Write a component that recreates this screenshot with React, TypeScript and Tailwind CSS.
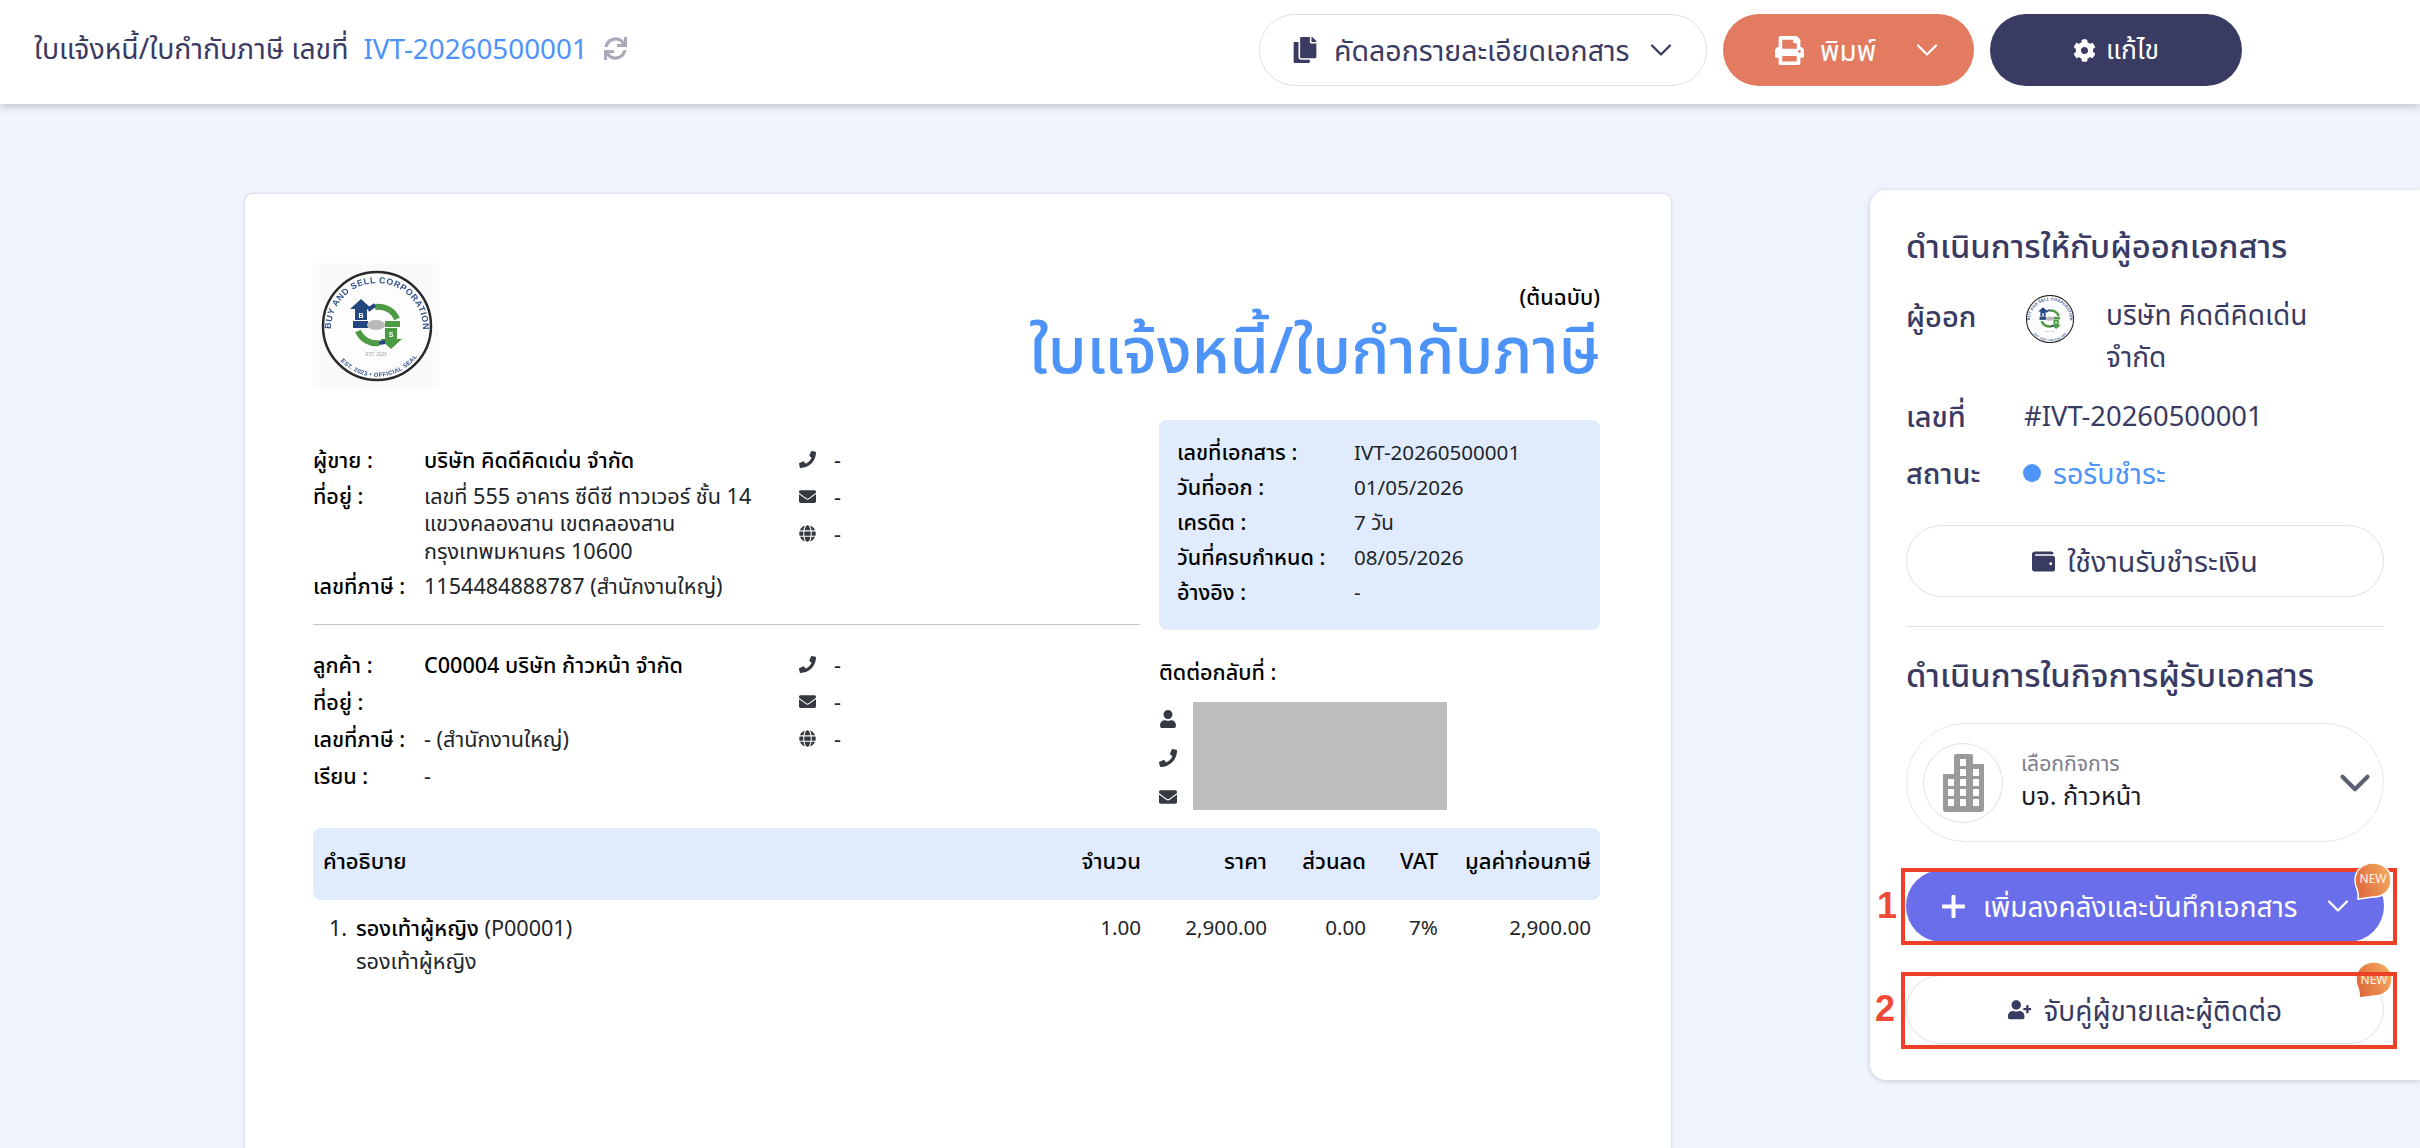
import { FaCog, FaCopy, FaPrint, FaSync, FaWallet, FaPhone, FaEnvelope, FaGlobe, FaUser, FaUserPlus } from 'react-icons/fa'
import { ChevronDown } from 'lucide-react'
import type { ReactNode } from 'react'

function SealLogo({ size, compact }: { size: number; compact?: boolean }) {
  return (
    <svg width={size} height={size} viewBox={compact ? '9 8 110 110' : '0 0 126 126'} className="blur-[0.4px]">
      <defs>
        <path id="sealTop" d="M18 66 A46 46 0 0 1 110 66" />
        <path id="sealBottom" d="M25 95 A50 50 0 0 0 103 95" />
      </defs>
      <circle cx="64" cy="63" r="54" fill="#fdfdfd" stroke="#2a2a2a" strokeWidth="2.5" />
      <text fontSize="8.8" fontWeight="700" fill="#34528c" letterSpacing="0.55" fontFamily="'Liberation Sans', sans-serif">
        <textPath href="#sealTop">BUY AND SELL CORPORATION</textPath>
      </text>
      <text fontSize="6" fontWeight="700" fill="#34528c" letterSpacing="0.35" fontFamily="'Liberation Sans', sans-serif">
        <textPath href="#sealBottom" startOffset="4">EST. 2023 • OFFICIAL SEAL</textPath>
      </text>
      <path d="M42 57 L42 46 L37 46 L48 36 L59 46 L54 46 L54 57 Z" fill="#24477f" />
      <text x="48" y="55" textAnchor="middle" fontSize="7" fontWeight="700" fill="#ffffff" fontFamily="'Liberation Sans', sans-serif">B</text>
      <path d="M72 65 L72 76 L67 76 L78 86 L89 76 L84 76 L84 65 Z" fill="#4d9a44" />
      <text x="78" y="74" textAnchor="middle" fontSize="7" fontWeight="700" fill="#ffffff" fontFamily="'Liberation Sans', sans-serif">S</text>
      <path d="M62 44 A20 20 0 0 1 84 56" fill="none" stroke="#4d9a44" strokeWidth="6" />
      <path d="M45 68 A20 20 0 0 0 66 80" fill="none" stroke="#4d9a44" strokeWidth="6" />
      <path d="M55 47 L62 42 M66 80 L72 79" fill="none" stroke="#24477f" strokeWidth="4" />
      <rect x="40" y="58" width="15" height="7" fill="#24477f" />
      <rect x="72" y="58" width="15" height="6" fill="#4d9a44" />
      <ellipse cx="63" cy="62" rx="9" ry="5" fill="#b9b9b9" />
      <text x="63" y="93" textAnchor="middle" fontSize="4.6" fill="#a0a0a0" fontFamily="'Liberation Sans', sans-serif">EST. 2023</text>
    </svg>
  )
}

function BuildingIcon() {
  const windows = [
    [5, 25], [5, 35], [5, 45],
    [17, 5], [17, 15], [17, 25], [17, 35], [17, 45],
    [30, 15], [30, 25], [30, 35], [30, 45],
  ]
  return (
    <svg width="41" height="58" viewBox="0 0 41 58">
      <path d="M11 2 Q11 0 13 0 L28 0 Q30 0 30 2 L30 10 L41 10 L41 55 Q41 58 38 58 L3 58 Q0 58 0 55 L0 20 L11 20 Z" fill="#9a9a9a" />
      {windows.map(([x, y]) => (
        <rect key={`${x}-${y}`} x={x} y={y} width="6" height="7" fill="#ffffff" />
      ))}
    </svg>
  )
}

function NewBadge({ clipped }: { clipped?: boolean }) {
  return (
    <div className={`absolute h-[38px] w-[38px] ${clipped ? 'right-[-9px] top-[-14px]' : 'right-[-8px] top-[-8px]'}`}>
      <svg width="38" height="38" viewBox="0 0 38 38" className="absolute inset-0">
        <defs>
          <linearGradient id="badgeFill" x1="0" y1="1" x2="1" y2="0.6">
            <stop offset="0" stopColor="#dd5f38" />
            <stop offset="1" stopColor="#f0a45c" />
          </linearGradient>
        </defs>
        <path d="M19 1 C29 1 37 8 37 18 C37 29 29 35 19 35 L4 37 C5 33 4 31 3 27 C1 23 1 21 1 18 C1 8 9 1 19 1 Z" fill="url(#badgeFill)" stroke="#ffffff" strokeWidth="1.5" />
      </svg>
      <span className={`absolute inset-x-0 text-center text-[12px] leading-[14px] text-[#fff3ea] ${clipped ? 'top-[12px]' : 'top-[10px]'}`}>NEW</span>
    </div>
  )
}

function ContactIcon({ icon }: { icon: ReactNode }) {
  return (
    <div className="flex h-[27.5px] items-center gap-[18px]">
      <span className="flex w-[18px] justify-center text-[17px] text-[#343a40]">{icon}</span>
      <span className="text-[21.6px] leading-[27.5px] text-[#212529]">-</span>
    </div>
  )
}

function Row({ label, children }: { label: string; children?: ReactNode }) {
  return (
    <div className="flex">
      <span className="w-[111px] shrink-0 text-[21.6px] font-medium leading-[27.5px] text-black">{label}</span>
      <div className="min-w-0 text-[21.6px] leading-[27.5px] text-[#212529]">{children}</div>
    </div>
  )
}

function MetaRow({ label, value }: { label: string; value: string }) {
  return (
    <div className="flex h-[35px] items-center">
      <span className="w-[177px] text-[21.6px] font-medium text-black">{label}</span>
      <span className="text-[20.6px] text-[#212529]">{value}</span>
    </div>
  )
}

const columns = [
  { title: 'จำนวน', value: '1.00', width: 'w-[90px]' },
  { title: 'ราคา', value: '2,900.00', width: 'w-[126px]' },
  { title: 'ส่วนลด', value: '0.00', width: 'w-[99px]' },
  { title: 'VAT', value: '7%', width: 'w-[72px]' },
  { title: 'มูลค่าก่อนภาษี', value: '2,900.00', width: 'w-[153px]' },
]

export default function App() {
  return (
    <div className="h-[1148px] w-full overflow-hidden bg-[#f0f4fc] font-['Noto_Sans','Noto_Sans_Thai',sans-serif] text-[#3a3b63]">
      <header className="relative z-10 flex h-[104px] items-center justify-between bg-white pb-1 pl-[34px] pr-[178px] shadow-[0_2px_8px_rgba(60,70,100,0.3)]">
        <div className="mb-[3px] flex items-center">
          <span className="text-[28.4px]">ใบแจ้งหนี้/ใบกำกับภาษี เลขที่</span>
          <span className="ml-[15px] text-[27.8px] text-[#4e94f8]">IVT-20260500001</span>
          <FaSync className="ml-4 text-[23px] text-[#a9aab8]" />
        </div>
        <div className="flex items-center gap-4">
          <button type="button" className="flex h-[72px] w-[448px] items-center rounded-full border border-[#dedfe8] bg-white pl-8 text-[28.5px]">
            <FaCopy className="text-[26px]" />
            <span className="ml-4">คัดลอกรายละเอียดเอกสาร</span>
            <ChevronDown className="ml-[14px] h-9 w-9" strokeWidth={1.5} />
          </button>
          <button type="button" className="flex h-[72px] w-[251px] items-center rounded-full bg-[#e37b60] pl-[52px] text-[28px] text-white">
            <FaPrint className="text-[29px]" />
            <span className="ml-4">พิมพ์</span>
            <ChevronDown className="ml-[33px] h-9 w-9" strokeWidth={1.5} />
          </button>
          <button type="button" className="flex h-[72px] w-[252px] items-center justify-center gap-2.5 rounded-full bg-[#3a3b63] text-[26.5px] text-white">
            <FaCog className="text-[23px]" />
            <span>แก้ไข</span>
          </button>
        </div>
      </header>

      <main className="flex items-start pl-[245px]">
        <section className="mt-[90px] h-[1000px] w-[1426px] rounded-lg bg-white pl-[68px] pr-[71px] pt-[69px] shadow-[0_0_3px_rgba(60,70,100,0.3)]">
          <div className="flex items-start justify-between">
            <div className="flex h-[125px] w-[126px] items-center justify-center bg-[#fafafa]">
              <SealLogo size={126} />
            </div>
            <div className="pt-[18px] text-right">
              <div className="text-[21.6px] font-medium leading-[32px] text-black">(ต้นฉบับ)</div>
              <h1 className="mt-[2px] text-[63.5px] font-medium leading-[68px] text-[#4e94f8]">ใบแจ้งหนี้/ใบกำกับภาษี</h1>
            </div>
          </div>

          <div className="mt-8 flex items-start">
            <div className="w-[827px]">
              <div className="flex pt-[26px]">
                <div className="w-[485px]">
                  <Row label="ผู้ขาย :"><span className="font-medium text-black">บริษัท คิดดีคิดเด่น จำกัด</span></Row>
                  <div className="mt-2">
                    <Row label="ที่อยู่ :">
                      เลขที่ 555 อาคาร ซีดีซี ทาวเวอร์ ชั้น 14<br />แขวงคลองสาน เขตคลองสาน<br />กรุงเทพมหานคร 10600
                    </Row>
                  </div>
                  <div className="mt-2">
                    <Row label="เลขที่ภาษี :">1154484888787 (สำนักงานใหญ่)</Row>
                  </div>
                </div>
                <div className="flex flex-col gap-[9.5px]">
                  <ContactIcon icon={<FaPhone />} />
                  <ContactIcon icon={<FaEnvelope />} />
                  <ContactIcon icon={<FaGlobe />} />
                </div>
              </div>
              <div className="mt-6 h-px bg-[#c4c4c4]" />
              <div className="flex pt-[26px]">
                <div className="flex w-[485px] flex-col gap-[9.5px]">
                  <Row label="ลูกค้า :"><span className="font-medium text-black">C00004 บริษัท ก้าวหน้า จำกัด</span></Row>
                  <Row label="ที่อยู่ :" />
                  <Row label="เลขที่ภาษี :">- (สำนักงานใหญ่)</Row>
                  <Row label="เรียน :">-</Row>
                </div>
                <div className="flex flex-col gap-[9.5px]">
                  <ContactIcon icon={<FaPhone />} />
                  <ContactIcon icon={<FaEnvelope />} />
                  <ContactIcon icon={<FaGlobe />} />
                </div>
              </div>
            </div>

            <div className="ml-[19px] w-[441px]">
              <div className="rounded-lg bg-[#e0ecfd] px-[18px] pb-5 pt-[15px]">
                <MetaRow label="เลขที่เอกสาร :" value="IVT-20260500001" />
                <MetaRow label="วันที่ออก :" value="01/05/2026" />
                <MetaRow label="เครดิต :" value="7 วัน" />
                <MetaRow label="วันที่ครบกำหนด :" value="08/05/2026" />
                <MetaRow label="อ้างอิง :" value="-" />
              </div>
              <div className="mt-[27px] text-[21.6px] font-medium leading-[30px] text-black">ติดต่อกลับที่ :</div>
              <div className="mt-[15px] flex">
                <div className="flex w-[34px] flex-col gap-[21px] pt-2 text-[18px] text-[#343a40]">
                  <FaUser />
                  <FaPhone />
                  <FaEnvelope />
                </div>
                <div className="h-[108px] w-[254px] bg-[#bebebe]" />
              </div>
            </div>
          </div>

          <div className="mt-[18px] flex h-[72px] rounded-lg bg-[#e0ecfd] pb-2 pl-2.5 pr-[9px] text-[22px] font-medium text-black">
            <div className="flex flex-1 items-center">คำอธิบาย</div>
            {columns.map((col) => (
              <div key={col.title} className={`flex items-center justify-end ${col.width}`}>{col.title}</div>
            ))}
          </div>
          <div className="flex pl-4 pr-[9px] pt-[11px] text-[21.6px] text-[#212529]">
            <div className="flex flex-1">
              <span className="w-[27px] leading-[33px]">1.</span>
              <div className="leading-[33px]">
                <div><span className="font-medium text-black">รองเท้าผู้หญิง</span> (P00001)</div>
                <div>รองเท้าผู้หญิง</div>
              </div>
            </div>
            {columns.map((col) => (
              <div key={col.title} className={`text-right text-[20.6px] leading-[33px] ${col.width}`}>{col.value}</div>
            ))}
          </div>
        </section>

        <aside className="ml-[199px] mt-[86px] w-[550px] shrink-0 rounded-l-2xl bg-white pb-9 pl-9 pr-9 pt-[34px] shadow-[0_1px_5px_rgba(60,70,100,0.25)]">
          <h2 className="text-[32.8px] font-medium leading-[44px]">ดำเนินการให้กับผู้ออกเอกสาร</h2>

          <div className="mt-[25px] flex text-[28px]">
            <span className="mt-[2px] w-[118px] text-[29px] font-medium leading-[42px]">ผู้ออก</span>
            <div className="flex">
              <div className="ml-[2px] mt-[2px] h-12 w-12 shrink-0"><SealLogo size={48} compact /></div>
              <span className="ml-8 w-[250px] leading-[42px]">บริษัท คิดดีคิดเด่น จำกัด</span>
            </div>
          </div>
          <div className="mt-[18px] flex leading-[42px]">
            <span className="w-[118px] text-[29px] font-medium">เลขที่</span>
            <span className="text-[27.4px]">#IVT-20260500001</span>
          </div>
          <div className="mt-[15px] flex items-center leading-[42px]">
            <span className="w-[117px] text-[29px] font-medium">สถานะ</span>
            <span className="h-[18px] w-[18px] rounded-full bg-[#4e94f8]" />
            <span className="ml-3 text-[28.6px] text-[#4e94f8]">รอรับชำระ</span>
          </div>
          <button type="button" className="mt-[31px] flex h-[72px] w-full items-center justify-center gap-3 rounded-full border border-[#dedfe8] text-[28.6px]">
            <FaWallet className="text-[23px]" />
            <span>ใช้งานรับชำระเงิน</span>
          </button>

          <div className="mt-[29px] h-px bg-[#dedfe8]" />

          <h2 className="mt-[26px] text-[32.8px] font-medium leading-[44px]">ดำเนินการในกิจการผู้รับเอกสาร</h2>

          <div className="mt-[26px] flex h-[119px] items-center rounded-[60px] border border-[#e6e7ee] pl-4 pr-[3px]">
            <div className="flex h-20 w-20 items-center justify-center rounded-full border border-[#dedfe8]">
              <BuildingIcon />
            </div>
            <div className="mb-[5px] ml-[18px] flex-1">
              <div className="text-[21.2px] leading-[30px] text-[#7d7d8c]">เลือกกิจการ</div>
              <div className="text-[25.3px] leading-[34px] text-[#1c1c28]">บจ. ก้าวหน้า</div>
            </div>
            <ChevronDown className="h-[50px] w-[50px] text-[#5b6170]" strokeWidth={2} />
          </div>

          <div className="relative mt-[28px] h-[72px]">
            <button type="button" className="flex h-full w-full items-center rounded-full bg-[#6b6eea] pl-9 text-[28px] text-white">
              <svg width="23" height="23" viewBox="0 0 23 23" fill="#ffffff">
                <rect x="9.5" y="0" width="4" height="23" rx="1" />
                <rect x="0" y="9.5" width="23" height="4" rx="1" />
              </svg>
              <span className="ml-[18px]">เพิ่มลงคลังและบันทึกเอกสาร</span>
              <ChevronDown className="ml-[22px] h-9 w-9" strokeWidth={1.5} />
            </button>
            <div className="pointer-events-none absolute -left-[5px] -right-[13px] -top-[2px] bottom-[-3px] border-4 border-[#ee4027]" />
            <span className="absolute -left-[29px] top-[16px] font-['Liberation_Sans',sans-serif] text-[36px] font-bold leading-[40px] text-[#ee4a35]">1</span>
            <NewBadge />
          </div>

          <div className="relative mt-[33px] h-[69px]">
            <NewBadge clipped />
            <button type="button" className="flex h-full w-full items-center justify-center gap-3 rounded-full border border-[#dedfe8] text-[28px]">
              <FaUserPlus className="text-[23.5px]" />
              <span>จับคู่ผู้ขายและผู้ติดต่อ</span>
            </button>
            <div className="pointer-events-none absolute -left-[5px] -right-[13px] -top-[3px] bottom-[-5px] border-4 border-[#ee4027]" />
            <span className="absolute -left-[31px] top-[14px] font-['Liberation_Sans',sans-serif] text-[36px] font-bold leading-[40px] text-[#ee4a35]">2</span>
          </div>
        </aside>
      </main>
    </div>
  )
}
